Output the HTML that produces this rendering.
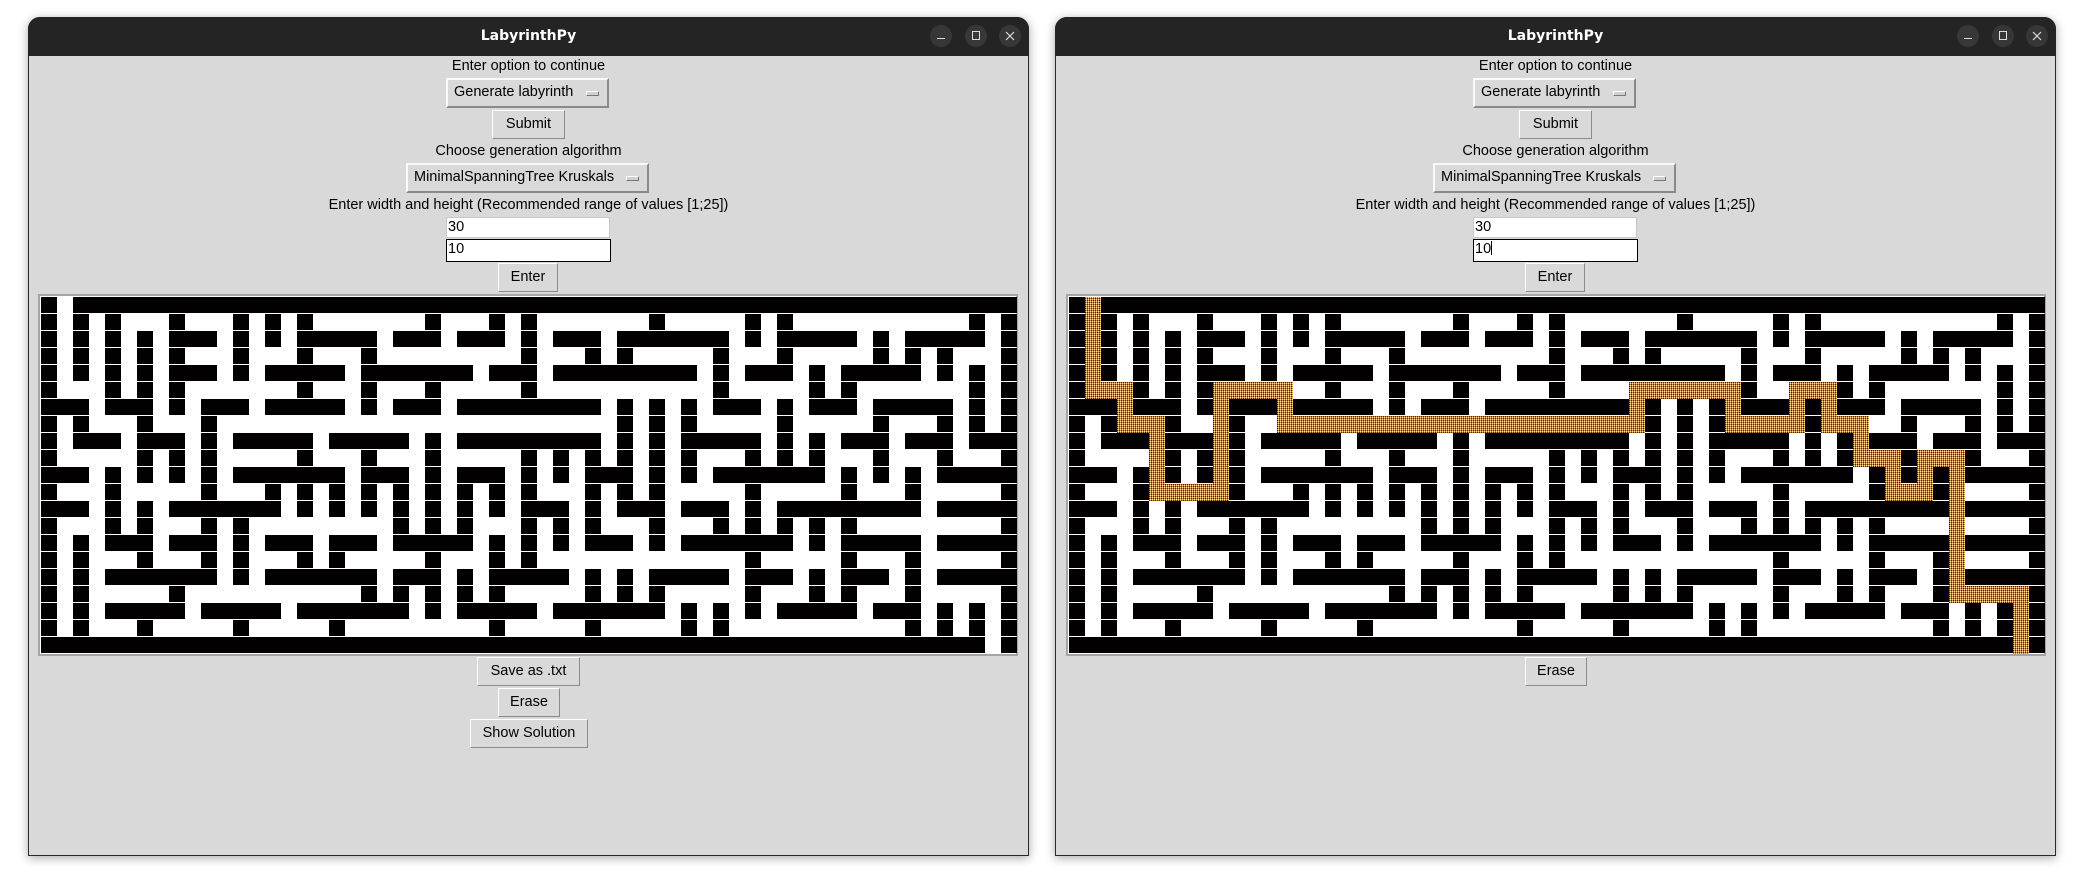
<!DOCTYPE html>
<html><head><meta charset="utf-8"><style>
*{box-sizing:border-box;margin:0;padding:0}
body{width:2082px;height:878px;background:#fff;position:relative;overflow:hidden;font-family:"Liberation Sans","DejaVu Sans",sans-serif;font-size:14.5px;color:#000}
.win{position:absolute;top:17px;width:1001px;height:839px;background:#d9d9d9;border:1px solid #2a2a2a;border-radius:12px 12px 0 0;box-shadow:0 2px 10px rgba(0,0,0,.35)}
.tb{position:absolute;left:-1px;top:-1px;right:-1px;height:39px;background:#242424;border-radius:12px 12px 0 0;color:#fff;font-weight:bold;font-size:14px;text-align:center;line-height:39px;font-family:"DejaVu Sans",sans-serif}
.cb{position:absolute;top:8px;width:22px;height:22px;border-radius:50%;background:#373737}
.lbl{position:absolute;left:0;right:0;text-align:center;height:16px;line-height:16px}
.btn{position:absolute;background:#d9d9d9;border:1px solid;border-color:#fff #8a8a8a #8a8a8a #fff;text-align:center;line-height:26px}
.om{position:absolute;background:#d9d9d9;border:2px solid;border-color:#fafafa #8a8a8a #8a8a8a #fafafa;padding-left:6px;line-height:25px}
.om i{position:absolute;right:8px;top:11px;width:13px;height:5px;border:1px solid;border-color:#fff #777 #777 #fff;background:#d0d0d0}
.en{position:absolute;background:#fff;border:1px solid #c8c8c8;padding-left:1px;line-height:19px}
.frame{position:absolute;top:276px;width:980px;height:362px;border:2px solid #a5a5a5;background:#fff}
.frame svg{position:absolute;left:0;top:0}
</style></head><body>
<svg width="0" height="0" style="position:absolute">
<defs>
<pattern id="pt" width="2" height="2" patternUnits="userSpaceOnUse">
<rect width="1" height="1" fill="#5b8ac0"/><rect x="1" width="1" height="1" fill="#e6e6e6"/><rect y="1" width="1" height="1" fill="#2a2a2a"/><rect x="1" y="1" width="1" height="1" fill="#c88a4a"/>
</pattern>
<g id="maze">
<path fill="none" stroke="#020000" stroke-width="16" d="M0 8H16M32 8H976
M0 25H16M32 25H48M64 25H80M128 25H144M192 25H208M224 25H240M256 25H272M384 25H400M448 25H464M480 25H496M608 25H624M704 25H720M736 25H752M928 25H944M960 25H976
M0 42H16M32 42H48M64 42H80M96 42H112M128 42H176M192 42H208M224 42H240M256 42H336M352 42H400M416 42H464M480 42H496M512 42H560M576 42H688M704 42H720M736 42H816M832 42H848M864 42H944M960 42H976
M0 59H16M32 59H48M64 59H80M96 59H112M128 59H144M192 59H208M256 59H272M320 59H336M480 59H496M544 59H560M576 59H592M672 59H688M736 59H752M832 59H848M864 59H880M896 59H912M960 59H976
M0 76H16M32 76H48M64 76H80M96 76H112M128 76H176M192 76H208M224 76H304M320 76H432M448 76H496M512 76H656M672 76H688M704 76H752M768 76H784M800 76H880M896 76H912M928 76H944M960 76H976
M0 93H16M64 93H80M96 93H112M128 93H144M256 93H272M320 93H336M384 93H400M480 93H496M672 93H688M768 93H784M800 93H816M928 93H944M960 93H976
M0 110H48M64 110H112M128 110H144M160 110H208M224 110H304M320 110H336M352 110H400M416 110H560M576 110H592M608 110H624M640 110H656M672 110H720M736 110H752M768 110H816M832 110H912M928 110H944M960 110H976
M0 127H16M32 127H48M96 127H112M160 127H176M576 127H592M608 127H624M640 127H656M736 127H752M832 127H848M896 127H912M928 127H944M960 127H976
M0 144H16M32 144H80M96 144H144M160 144H176M192 144H272M288 144H368M384 144H400M416 144H560M576 144H592M608 144H624M640 144H720M736 144H752M768 144H784M800 144H848M864 144H912M928 144H976
M0 161H16M96 161H112M128 161H144M160 161H176M256 161H272M320 161H336M384 161H400M480 161H496M512 161H528M544 161H560M576 161H592M608 161H624M640 161H656M704 161H720M736 161H752M768 161H784M832 161H848M896 161H912M960 161H976
M0 178H48M64 178H80M96 178H112M128 178H144M160 178H176M192 178H304M320 178H368M384 178H400M416 178H464M480 178H496M512 178H528M544 178H592M608 178H624M640 178H656M672 178H784M800 178H816M832 178H848M864 178H880M896 178H976
M0 195H16M64 195H80M160 195H176M224 195H240M256 195H272M288 195H304M320 195H336M352 195H368M384 195H400M416 195H432M448 195H464M480 195H496M544 195H560M576 195H592M608 195H624M704 195H720M800 195H816M864 195H880M960 195H976
M0 212H48M64 212H80M96 212H112M128 212H240M256 212H272M288 212H304M320 212H336M352 212H368M384 212H400M416 212H432M448 212H464M480 212H528M544 212H560M576 212H624M640 212H688M704 212H720M736 212H880M896 212H976
M0 229H16M64 229H80M96 229H112M160 229H176M192 229H208M352 229H368M384 229H400M416 229H432M480 229H496M512 229H528M544 229H560M608 229H624M672 229H688M704 229H720M736 229H752M768 229H784M800 229H816M960 229H976
M0 246H16M32 246H48M64 246H112M128 246H176M192 246H208M224 246H272M288 246H336M352 246H432M448 246H464M480 246H496M512 246H528M544 246H592M608 246H624M640 246H752M768 246H784M800 246H880M896 246H976
M0 263H16M32 263H48M96 263H112M160 263H176M192 263H208M256 263H272M288 263H304M384 263H400M448 263H464M480 263H496M704 263H720M800 263H816M864 263H880M960 263H976
M0 280H16M32 280H48M64 280H176M192 280H208M224 280H336M352 280H400M416 280H432M448 280H528M544 280H560M576 280H592M608 280H688M704 280H752M768 280H784M800 280H848M864 280H880M896 280H976
M0 297H16M32 297H48M128 297H144M320 297H336M352 297H368M384 297H400M416 297H432M448 297H464M544 297H560M576 297H592M608 297H624M704 297H720M768 297H784M800 297H816M864 297H880M960 297H976
M0 314H16M32 314H48M64 314H144M160 314H240M256 314H368M384 314H400M416 314H496M512 314H624M640 314H656M672 314H688M704 314H720M736 314H816M832 314H880M896 314H912M928 314H944M960 314H976
M0 331H16M32 331H48M96 331H112M192 331H208M288 331H304M448 331H464M544 331H560M640 331H656M672 331H688M864 331H880M896 331H912M928 331H944M960 331H976
M0 348H944M960 348H976"/>
</g>
</defs></svg>

<!-- LEFT WINDOW -->
<div class="win" style="left:28px">
  <div class="tb">LabyrinthPy
    <div class="cb" style="left:902px"><div style="position:absolute;left:7px;top:13px;width:8px;height:1px;background:#ddd"></div></div>
    <div class="cb" style="left:937px"><div style="position:absolute;left:7px;top:6px;width:8px;height:9px;border:1px solid #ddd"></div></div>
    <div class="cb" style="left:971px"><svg style="position:absolute;left:6px;top:6px" width="10" height="10"><path d="M1 1L9 9M9 1L1 9" stroke="#ddd" stroke-width="1.2"/></svg></div>
  </div>
  <div class="lbl" style="top:40px">Enter option to continue</div>
  <div class="om" style="left:417px;top:60px;width:163px;height:30px">Generate labyrinth<i></i></div>
  <div class="btn" style="left:463px;top:92px;width:73px;height:29px">Submit</div>
  <div class="lbl" style="top:125px">Choose generation algorithm</div>
  <div class="om" style="left:377px;top:145px;width:243px;height:30px">MinimalSpanningTree Kruskals<i></i></div>
  <div class="lbl" style="top:179px">Enter width and height (Recommended range of values [1;25])</div>
  <div class="en" style="left:417px;top:199px;width:164px;height:21px">30</div>
  <div class="en" style="left:417px;top:221px;width:165px;height:23px;border-color:#000">10</div>
  <div class="btn" style="left:469px;top:245px;width:60px;height:29px">Enter</div>
  <div class="frame" style="left:9px"><svg width="976" height="357" style="left:1px;top:1px"><use href="#maze"/></svg></div>
  <div class="btn" style="left:448px;top:639px;width:103px;height:29px">Save as .txt</div>
  <div class="btn" style="left:469px;top:670px;width:62px;height:29px">Erase</div>
  <div class="btn" style="left:441px;top:701px;width:118px;height:29px">Show Solution</div>
</div>

<!-- RIGHT WINDOW -->
<div class="win" style="left:1055px">
  <div class="tb">LabyrinthPy
    <div class="cb" style="left:902px"><div style="position:absolute;left:7px;top:13px;width:8px;height:1px;background:#ddd"></div></div>
    <div class="cb" style="left:937px"><div style="position:absolute;left:7px;top:6px;width:8px;height:9px;border:1px solid #ddd"></div></div>
    <div class="cb" style="left:971px"><svg style="position:absolute;left:6px;top:6px" width="10" height="10"><path d="M1 1L9 9M9 1L1 9" stroke="#ddd" stroke-width="1.2"/></svg></div>
  </div>
  <div class="lbl" style="top:40px">Enter option to continue</div>
  <div class="om" style="left:417px;top:60px;width:163px;height:30px">Generate labyrinth<i></i></div>
  <div class="btn" style="left:463px;top:92px;width:73px;height:29px">Submit</div>
  <div class="lbl" style="top:125px">Choose generation algorithm</div>
  <div class="om" style="left:377px;top:145px;width:243px;height:30px">MinimalSpanningTree Kruskals<i></i></div>
  <div class="lbl" style="top:179px">Enter width and height (Recommended range of values [1;25])</div>
  <div class="en" style="left:417px;top:199px;width:164px;height:21px">30</div>
  <div class="en" style="left:417px;top:221px;width:165px;height:23px;border-color:#000">10<span style="display:inline-block;width:1px;height:14px;background:#000;vertical-align:-2px"></span></div>
  <div class="btn" style="left:469px;top:245px;width:60px;height:29px">Enter</div>
  <div class="frame" style="left:10px"><svg width="976" height="357" style="left:1px;top:1px"><use href="#maze"/>
  <path fill="none" stroke="url(#pt)" stroke-width="17" d="M16 8.5H32M16 25.5H32M16 42.5H32M16 59.5H32M16 76.5H32
M16 93.5H64M144 93.5H224M560 93.5H672M720 93.5H768
M48 110.5H64M144 110.5H160M208 110.5H224M560 110.5H576M656 110.5H672M720 110.5H736M752 110.5H768
M48 127.5H96M144 127.5H160M208 127.5H576M656 127.5H736M752 127.5H800
M80 144.5H96M144 144.5H160M784 144.5H800
M80 161.5H96M144 161.5H160M784 161.5H832M848 161.5H896
M80 178.5H96M144 178.5H160M816 178.5H832M848 178.5H864M880 178.5H896
M80 195.5H160M816 195.5H864M880 195.5H896
M880 212.5H896M880 229.5H896M880 246.5H896M880 263.5H896M880 280.5H896
M880 297.5H960M944 314.5H960M944 331.5H960M944 348.5H960"/>
  </svg></div>
  <div class="btn" style="left:469px;top:639px;width:62px;height:29px">Erase</div>
</div>
</body></html>
